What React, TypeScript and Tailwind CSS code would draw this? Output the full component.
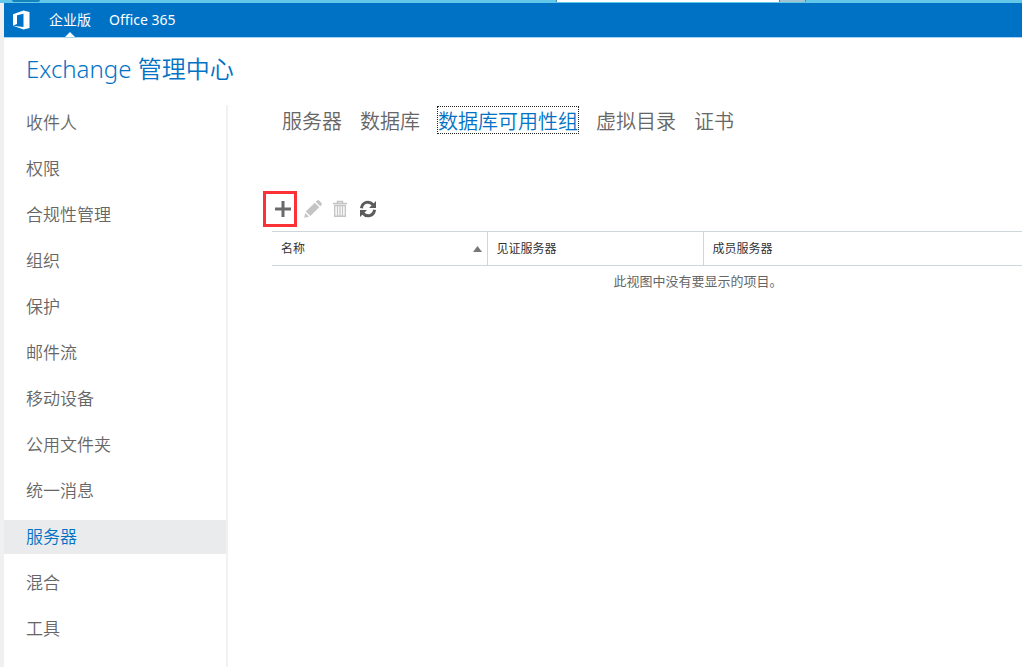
import { useState } from "react";
import clsx from "clsx";

const NAV_ITEMS = [
  "收件人",
  "权限",
  "合规性管理",
  "组织",
  "保护",
  "邮件流",
  "移动设备",
  "公用文件夹",
  "统一消息",
  "服务器",
  "混合",
  "工具",
];

const TABS = ["服务器", "数据库", "数据库可用性组", "虚拟目录", "证书"];

function OfficeLogo() {
  return (
    <svg width="20" height="20" viewBox="0 0 20 20" fill="#fff" aria-hidden="true">
      <path fillRule="evenodd" d="M1 4.200 11.500.5 17.500 2v16L11.500 19.500 1 15.700l10.500 1.200V3.800L5 5.300v8.700l-4 1.700z" />
    </svg>
  );
}

function PlusIcon() {
  return (
    <svg width="18" height="18" viewBox="0 0 18 18" fill="#6a6a6a" aria-hidden="true">
      <path d="M7.500 1h3v6.500H17v3h-6.500V17h-3v-6.500H1v-3h6.500z" />
    </svg>
  );
}

function PencilIcon() {
  return (
    <svg width="18" height="18" viewBox="0 0 18 18" fill="#c4c4c4" aria-hidden="true">
      <path d="M1.800 11.600 10.800 2.700l4.500 4.500-9 8.900zM11.800 1.800l1.300-1.300q1-.9 2 0l2.400 2.400q.9 1 0 2l-1.300 1.300zM1.200 13l3.800 3.800L.2 17.800z" />
    </svg>
  );
}

function TrashIcon() {
  return (
    <svg width="16" height="18" viewBox="0 0 16 18" fill="none" stroke="#c4c4c4" aria-hidden="true">
      <path d="M1 3.500h14M5.500 3V1.500h5V3" strokeWidth="1.500" />
      <path d="M2.700 5.500h10.600v10.800H2.700z" strokeWidth="1.400" />
      <path d="M5.500 6v10M8 6v10M10.500 6v10" strokeWidth="1.300" />
    </svg>
  );
}

function RefreshIcon() {
  return (
    <svg width="18" height="18" viewBox="0 0 18 18" aria-hidden="true">
      <g fill="none" stroke="#5c5c5c" strokeWidth="3">
        <path d="M2.400 8.200C3.400 1.600 10.500.4 14 4.800" />
        <path d="M15.600 9.800C14.600 16.400 7.500 17.600 4 13.200" />
      </g>
      <path d="M17 1v7h-7zM1 17v-7h7z" fill="#5c5c5c" />
    </svg>
  );
}

export default function App() {
  const [activeNav, setActiveNav] = useState("服务器");
  const [activeTab, setActiveTab] = useState("数据库可用性组");

  return (
    <div className="flex min-h-screen flex-col bg-white font-['Noto_Sans','Noto_Sans_CJK_SC',sans-serif] text-[#666]">
      {/* Bottom edge of the browser's tab strip */}
      <div className="flex h-[3px] bg-[#62c8ea]">
        <div className="ml-3 h-[2px] w-7 shrink-0 rounded-b-sm bg-[#1583bb]" />
        <div className="ml-[516px] h-[2px] w-[224px] shrink-0 border-x border-[#4a8fa8] bg-white" />
        <div className="h-[2px] w-[26px] border-r border-[#4a8fa8] bg-[#9ec4d3]" />
      </div>

      <div className="flex flex-1 flex-col border-l-4 border-[#f0f0f0]">
        <header className="flex h-[35px] items-center border-b border-[#a8d4f2] bg-[#0072c6] pl-2 text-white">
          <OfficeLogo />
          <nav className="flex h-full gap-[18px] pl-[17px] text-sm">
            <a href="#enterprise" className="relative flex items-center">
              企业版
              <svg className="absolute bottom-0 left-1/2 -translate-x-1/2" width="10" height="5" viewBox="0 0 10 5" aria-hidden="true">
                <path d="M5 0l5 5H0z" fill="#fff" />
              </svg>
            </a>
            <a href="#office365" className="flex items-center">
              Office 365
            </a>
          </nav>
        </header>

        <h1 className="pt-[11px] pl-[22px] text-[24px] leading-10 font-[350] text-[#0072c6]">Exchange 管理中心</h1>

        <div className="flex flex-1 pt-4">
          <nav className="flex w-[224px] shrink-0 flex-col gap-3 border-r-2 border-[#f1f1f1] pt-px">
            {NAV_ITEMS.map((item) => (
              <a
                key={item}
                href="#nav"
                onClick={() => setActiveNav(item)}
                className={clsx(
                  "flex h-[34px] items-center pl-[22px] text-[17px] font-[350]",
                  item === activeNav && "bg-[#eaebec] text-[#0072c6]"
                )}
              >
                {item}
              </a>
            ))}
          </nav>

          <main className="min-w-0 flex-1 overflow-hidden pl-[35px]">
            <div className="flex gap-4 pt-px pl-[18px] text-[20px] leading-[22px] font-[350]">
              {TABS.map((tab) => (
                <a
                  key={tab}
                  href="#tab"
                  onClick={() => setActiveTab(tab)}
                  className={clsx(
                    "border border-dotted pt-1",
                    tab === activeTab ? "border-[#222] text-[#0072c6]" : "border-transparent"
                  )}
                >
                  {tab}
                </a>
              ))}
            </div>

            <div className="flex items-center pt-[57px]">
              <button type="button" aria-label="新建" className="flex h-9 w-[34px] items-center justify-center border-3 border-[#fb3337] pl-[6px]">
                <PlusIcon />
              </button>
              <button type="button" aria-label="编辑" className="ml-[7px]">
                <PencilIcon />
              </button>
              <button type="button" aria-label="删除" className="ml-[10px]">
                <TrashIcon />
              </button>
              <button type="button" aria-label="刷新" className="ml-[11px]">
                <RefreshIcon />
              </button>
            </div>

            <div className="mt-1 pl-[9px]">
              <table className="w-[852px] table-fixed border-collapse text-left">
                <thead>
                  <tr className="h-[34px] border-y border-[#cfd6da] text-[12px] text-[#333]">
                    <th className="w-[215px] border-r border-[#cfd6da] px-[9px] font-normal">
                      <span className="flex items-center justify-between">
                        名称
                        <svg className="-mr-1" width="9" height="6" viewBox="0 0 9 6" aria-hidden="true">
                          <path d="M4.500 0 9 6H0z" fill="#777" />
                        </svg>
                      </span>
                    </th>
                    <th className="w-[216px] border-r border-[#cfd6da] px-[9px] font-normal">见证服务器</th>
                    <th className="px-[9px] font-normal">成员服务器</th>
                  </tr>
                </thead>
                <tbody>
                  <tr>
                    <td colSpan={3} className="py-[5px] text-center text-[13px] leading-5">
                      此视图中没有要显示的项目。
                    </td>
                  </tr>
                </tbody>
              </table>
            </div>
          </main>
        </div>
      </div>
    </div>
  );
}
